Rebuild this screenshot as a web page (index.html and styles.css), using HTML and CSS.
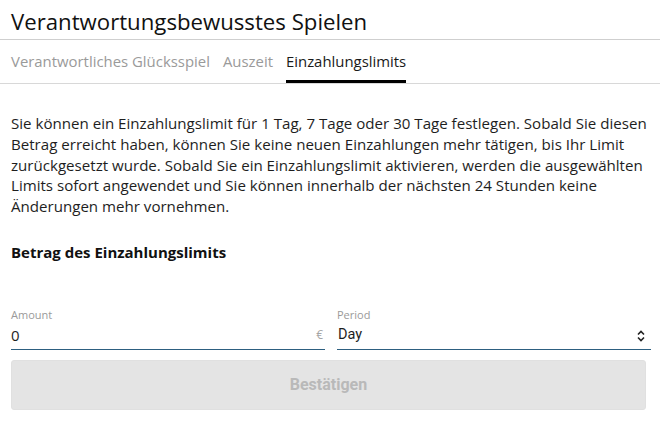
FILE: index.html
```html
<!DOCTYPE html>
<html lang="de">
<head>
<meta charset="utf-8">
<link rel="stylesheet" href="styles.css">
</head>
<body>
<div class="page">
  <h1 class="title">Verantwortungsbewusstes Spielen</h1>
  <nav class="tabs">
    <span class="tab">Verantwortliches Glücksspiel</span>
    <span class="tab">Auszeit</span>
    <span class="tab active">Einzahlungslimits</span>
  </nav>
  <p class="intro">Sie können ein Einzahlungslimit für 1 Tag, 7 Tage oder 30 Tage festlegen. Sobald Sie diesen<br>Betrag erreicht haben, können Sie keine neuen Einzahlungen mehr tätigen, bis Ihr Limit<br>zurückgesetzt wurde. Sobald Sie ein Einzahlungslimit aktivieren, werden die ausgewählten<br>Limits sofort angewendet und Sie können innerhalb der nächsten 24 Stunden keine<br>Änderungen mehr vornehmen.</p>
  <h2 class="section">Betrag des Einzahlungslimits</h2>
  <div class="fields">
    <label class="field">
      <span class="label">Amount</span>
      <span class="control"><span class="value">0</span><span class="suffix">€</span></span>
    </label>
    <label class="field">
      <span class="label">Period</span>
      <span class="control"><span class="value select">Day</span>
        <svg class="chev" width="8" height="12" viewBox="0 0 8 12"><path d="M1 4.5 L4 1.5 L7 4.5 M1 7.5 L4 10.5 L7 7.5" fill="none" stroke="#222" stroke-width="1.6"/></svg>
      </span>
    </label>
  </div>
  <button class="confirm" disabled>Bestätigen</button>
</div>
</body>
</html>
```
FILE: styles.css
```css
html, body { margin: 0; padding: 0; background: #fff; }
body { font-family: "Segoe UI", "Open Sans", sans-serif; color: #1e1e1e; }
.page { width: 660px; }
.title {
  margin: 0;
  padding: 7px 11px 0;
  height: 32px;
  font-size: 22.2px;
  font-weight: 400;
  line-height: 30px;
  color: #111;
  border-bottom: 1px solid #cfcfcf;
}
.tabs {
  display: flex;
  gap: 13px;
  padding: 0 11px;
  height: 43px;
  border-bottom: 1px solid #d8d8d8;
}
.tab {
  font-size: 14.9px;
  color: #9a9a9a;
  line-height: 20px;
  padding-top: 11px;
  box-sizing: border-box;
  border-bottom: 3px solid transparent;
}
.tab.active { color: #1a1a1a; border-bottom-color: #000; }
.intro {
  margin: 29px 11px 0;
  font-size: 15.1px;
  line-height: 20.8px;
  color: #1e1e1e;
  white-space: nowrap;
}
.section {
  margin: 25px 11px 0;
  font-size: 15px;
  font-weight: 700;
  line-height: 20px;
  color: #111;
}
.fields {
  display: grid;
  grid-template-columns: 1fr 1fr;
  gap: 12px;
  margin: 46px 9px 0 11px;
}
.field { display: flex; flex-direction: column; }
.label { font-size: 11px; color: #9a9a9a; line-height: 14px; }
.control {
  display: flex;
  align-items: flex-start;
  justify-content: space-between;
  height: 28px;
  padding-top: 2px;
  box-sizing: border-box;
  border-bottom: 1px solid #2d5f80;
}
.value { font-size: 15px; color: #1e1e1e; line-height: 22px; }
.value.select { font-family: Roboto, sans-serif; font-size: 14.5px; padding-left: 1px; }
.suffix { font-size: 12px; color: #a5a5a5; padding-right: 2px; line-height: 22px; }
.chev { margin: 6px 6px 0 0; }
.confirm {
  display: block;
  width: 635px;
  height: 50px;
  margin: 10px 0 0 11px;
  border: 1px solid #e0e0e0;
  border-radius: 3px;
  background: #e4e4e4;
  color: #b9b9b9;
  font-family: Roboto, Arial, sans-serif;
  font-weight: 700;
  font-size: 16px;
}
```
